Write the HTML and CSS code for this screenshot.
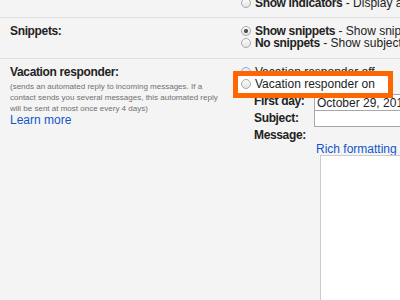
FILE: index.html
```html
<!DOCTYPE html>
<html lang="en">
<head>
  <meta charset="UTF-8">
  <title>Settings - General</title>
  <meta name="viewport" content="width=device-width, initial-scale=1.0">
  <link rel="stylesheet" href="styles.css">
</head>
<body>
  <div class="settings">
    <div class="row row-first">
      <div class="label"></div>
      <div class="options">
        <div class="option"><span class="radio"></span><b>Show indicators</b> - Display an arrow ( › ) by messages sent to my address (not a mailing list), and a double arrow ( » ) by messages sent only to me.</div>
      </div>
    </div>

    <div class="row">
      <div class="label"><b>Snippets:</b></div>
      <div class="options">
        <div class="option"><span class="radio checked"></span><b>Show snippets</b> - Show snippets of the message (like Google web search!).</div>
        <div class="option"><span class="radio"></span><b>No snippets</b> - Show subject only.</div>
      </div>
    </div>

    <div class="row">
      <div class="label">
        <b>Vacation responder:</b>
        <div class="note">(sends an automated reply to incoming messages. If a contact sends you several messages, this automated reply will be sent at most once every 4 days)</div>
        <a class="link" href="#">Learn more</a>
      </div>
      <div class="options">
        <div class="option"><span class="radio focused"></span>Vacation responder off</div>
        <div class="option option-on"><span class="radio"></span>Vacation responder on</div>

        <div class="vacation-form">
          <div class="field-label">First day:</div>
          <input class="field" type="text" value="October 29, 2017">
          <div class="field-label">Subject:</div>
          <input class="field field-subject" type="text">
          <div class="field-label message-label">Message:</div>
          <a class="link rich-link" href="#">Rich formatting »</a>
          <div class="message-box"></div>
        </div>
      </div>
    </div>
  </div>
</body>
</html>
```

FILE: styles.css
```css
body {
  margin: 0;
  background-color: #f4f4f4;
  font-family: "Liberation Sans", Arial, sans-serif;
  font-size: 12px;
  color: #222;
  overflow: hidden;
}

b {
  letter-spacing: -0.35px;
}

.settings {
  margin-top: -10px;
}

.row {
  display: flex;
  padding: 7px 0 9px;
  border-bottom: 1px solid #dedede;
  line-height: 12px;
}

.row-first {
  padding-bottom: 8px;
}

.label {
  flex: none;
  width: 241px;
  box-sizing: border-box;
  padding-left: 10px;
}

.options {
  flex: none;
  white-space: nowrap;
}

.option {
  line-height: 12px;
}

.radio {
  display: inline-block;
  width: 10px;
  height: 10px;
  box-sizing: border-box;
  margin-right: 4px;
  border: 1px solid #a9a9a9;
  border-radius: 50%;
  background: linear-gradient(#fbfbfb, #e4e4e4);
  vertical-align: middle;
  position: relative;
  top: -1px;
}

.radio.checked {
  background: radial-gradient(circle, #555 0 1.8px, transparent 2.4px), linear-gradient(#fbfbfb, #e4e4e4);
}

.radio.focused {
  border-color: #7ea8e2;
  background: linear-gradient(#eef4fd, #cbdcf4);
}

.note {
  width: 214px;
  margin-top: 3px;
  font-size: 8px;
  line-height: 11px;
  color: #707070;
}

.link {
  color: #1155cc;
  text-decoration: none;
}

.option-on {
  position: relative;
  z-index: 1;
  width: 147px;
  margin: -7px 0 0 -8px;
  padding-left: 3px;
  border: 5px solid #ff6600;
  background: #fff;
  line-height: 17px;
}

.vacation-form {
  display: grid;
  grid-template-columns: 60px auto;
  margin: -4px 0 0 13px;
}

.field-label {
  font-weight: bold;
  line-height: 15px;
  letter-spacing: -0.35px;
}

.field {
  width: 200px;
  height: 17px;
  box-sizing: border-box;
  margin: 0;
  padding: 0 2px;
  border: 1px solid #a8a8a8;
  background: #fff;
  font-family: inherit;
  font-size: 12px;
  color: #222;
}

.field-subject {
  margin-top: -1px;
}

.message-label {
  grid-column: 1;
  grid-row: 3;
  margin-top: 2px;
  line-height: 12px;
}

.rich-link {
  grid-column: 2;
  grid-row: 4;
  margin: 2px 0 0 2px;
  line-height: 12px;
}

.message-box {
  grid-column: 2;
  grid-row: 5;
  width: 300px;
  height: 200px;
  margin-left: 6px;
  border: 1px solid #cccccc;
  background: #fff;
}
```
